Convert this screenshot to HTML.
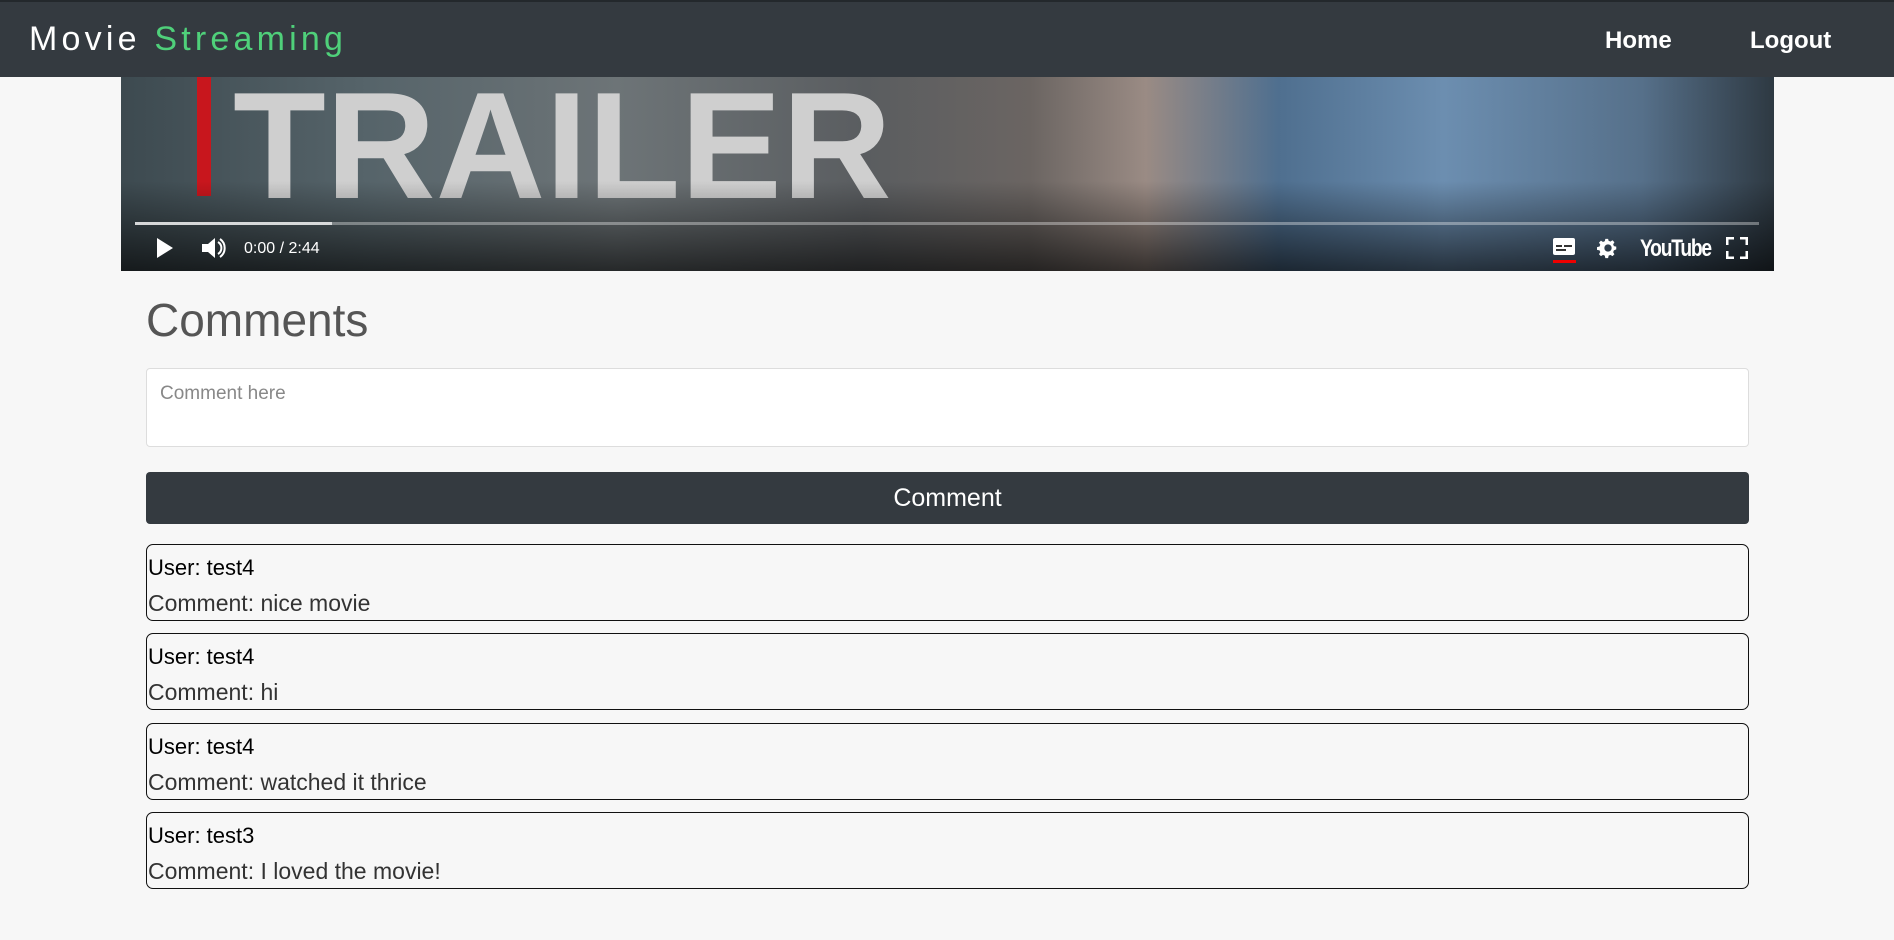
<!DOCTYPE html>
<html><head><meta charset="utf-8"><style>
*{box-sizing:border-box;margin:0;padding:0}
body{width:1894px;height:940px;background:#f7f7f7;font-family:"Liberation Sans",sans-serif;position:relative;overflow:hidden}
.nav{position:absolute;left:0;top:0;width:1894px;height:77px;background:#343a40;border-top:2px solid #23282c}
.brand{position:absolute;left:29px;top:18px;font-size:34px;letter-spacing:4.2px;color:#fff}
.brand span{color:#4fd07a}
.nl{position:absolute;top:25px;color:#fff;font-size:24px;font-weight:bold}
.video{position:absolute;left:121px;top:77px;width:1653px;height:194px;overflow:hidden;
background:linear-gradient(90deg,#3d4a50 0%,#56646a 15%,#6d7477 30%,#5a5d60 45%,#6b6562 55%,#9a8b84 62%,#4f6f8f 70%,#6c8eb0 80%,#56708a 92%,#2e3942 100%)}
.shade{position:absolute;left:0;bottom:0;width:100%;height:90px;background:linear-gradient(transparent,rgba(0,0,0,.65))}
.trailer{position:absolute;left:112px;top:-18px;font-size:152px;font-weight:bold;color:#cfcfcf;letter-spacing:0px}
.red{position:absolute;left:76px;top:0;width:14px;height:119px;background:#c8161d}
.prog{position:absolute;left:14px;top:145px;width:1624px;height:3px;background:rgba(255,255,255,.35)}
.prog b{display:block;width:197px;height:3px;background:rgba(255,255,255,.7)}
.time{position:absolute;left:123px;top:163px;color:#fff;font-size:16px}
.yt{position:absolute;left:1519px;top:158px;color:#fff;font-size:24px;font-weight:bold;letter-spacing:-1.5px;transform:scaleX(.8);transform-origin:left}
h2{position:absolute;left:146px;top:293px;font-size:46px;font-weight:normal;color:#555}
.ta{position:absolute;left:146px;top:368px;width:1603px;height:79px;background:#fff;border:1px solid #ddd;border-radius:4px}
.ta span{position:absolute;left:13px;top:14px;color:#888;font-size:19px}
.btn{position:absolute;left:146px;top:472px;width:1603px;height:52px;background:#343a40;border-radius:4px;color:#fff;font-size:25px;text-align:center;line-height:52px}
.c{position:absolute;left:146px;width:1603px;height:77px;border:1px solid #111;border-radius:7px}
.c .u{position:absolute;left:1px;top:10px;font-size:22px;color:#000}
.c .m{position:absolute;left:1px;top:45px;font-size:23px;color:#333}
</style></head><body>
<div class="nav"><div class="brand">Movie <span>Streaming</span></div>
<div class="nl" style="left:1605px">Home</div><div class="nl" style="left:1750px">Logout</div></div>
<div class="video">
<div class="red"></div><div class="trailer">TRAILER</div>
<div class="shade"></div>
<div class="prog"><b></b></div>
<svg style="position:absolute;left:34px;top:160px" width="20" height="22"><path d="M2 1 L18 11 L2 21Z" fill="#fff"/></svg>
<svg style="position:absolute;left:80px;top:159px" width="26" height="24"><path d="M1 8h6l7-6v20l-7-6H1z" fill="#fff"/><path d="M17 6a7 7 0 0 1 0 12M19 3a11 11 0 0 1 0 18" stroke="#fff" stroke-width="2" fill="none"/></svg>
<div class="time">0:00 / 2:44</div>
<svg style="position:absolute;left:1430px;top:160px" width="26" height="28"><rect x="2" y="1" width="22" height="17" rx="2" fill="#fff"/><rect x="5" y="8" width="6" height="2" fill="#333"/><rect x="13" y="8" width="8" height="2" fill="#333"/><rect x="5" y="12" width="10" height="2" fill="#333"/><rect x="2" y="23" width="23" height="3" fill="#e00"/></svg>
<svg style="position:absolute;left:1476px;top:160px" width="22" height="22" viewBox="0 0 24 24"><path fill="#fff" fill-rule="evenodd" d="M12 8a4 4 0 1 0 0 8 4 4 0 0 0 0-8zm9 5.5v-3l-2.6-.6a7 7 0 0 0-.8-1.9l1.4-2.3-2.1-2.1-2.3 1.4a7 7 0 0 0-1.9-.8L12.1 2h-3l-.6 2.6a7 7 0 0 0-1.9.8L4.3 4 2.2 6.1l1.4 2.3a7 7 0 0 0-.8 1.9L0 11v3l2.8.6c.2.7.4 1.3.8 1.9l-1.4 2.3 2.1 2.1 2.3-1.4c.6.4 1.2.6 1.9.8l.6 2.7h3l.6-2.7c.7-.2 1.3-.4 1.9-.8l2.3 1.4 2.1-2.1-1.4-2.3c.4-.6.6-1.2.8-1.9z"/></svg>
<div class="yt">YouTube</div>
<svg style="position:absolute;left:1605px;top:160px" width="22" height="22"><path d="M1 8V1h7M14 1h7v7M21 14v7h-7M8 21H1v-7" stroke="#fff" stroke-width="3" fill="none"/></svg>
</div>
<h2>Comments</h2>
<div class="ta"><span>Comment here</span></div>
<div class="btn">Comment</div>
<div class="c" style="top:544px"><div class="u">User: test4</div><div class="m">Comment: nice movie</div></div>
<div class="c" style="top:633px"><div class="u">User: test4</div><div class="m">Comment: hi</div></div>
<div class="c" style="top:723px"><div class="u">User: test4</div><div class="m">Comment: watched it thrice</div></div>
<div class="c" style="top:812px"><div class="u">User: test3</div><div class="m">Comment: I loved the movie!</div></div>
</body></html>
